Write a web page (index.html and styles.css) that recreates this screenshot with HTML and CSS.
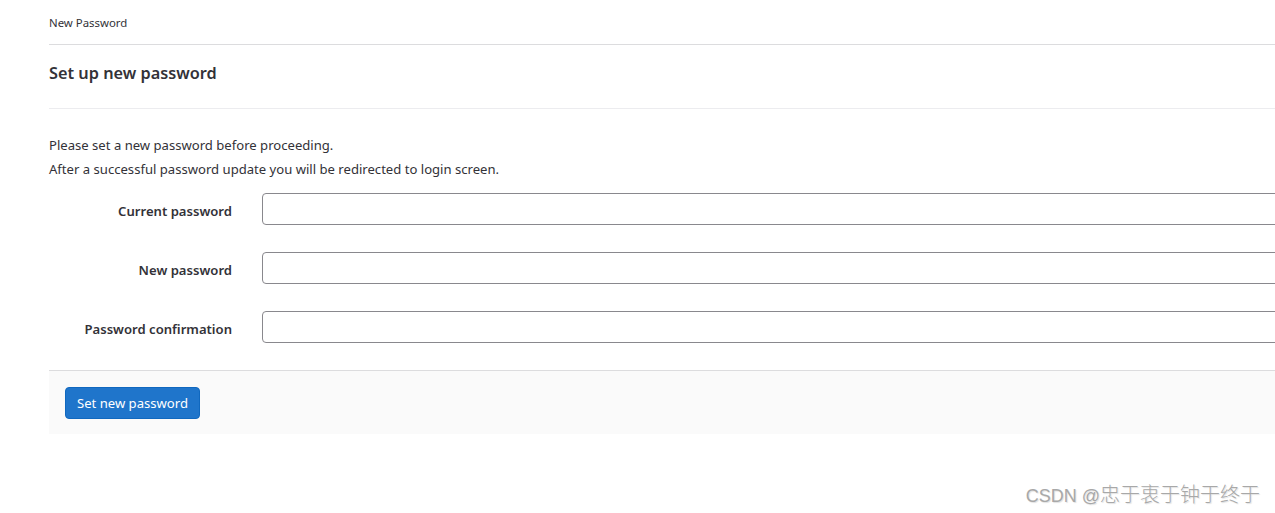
FILE: index.html
```html
<!DOCTYPE html>
<html>
<head>
<meta charset="utf-8">
<title>New Password</title>
<link rel="stylesheet" href="styles.css">
</head>
<body>
<div class="page">
  <div class="breadcrumb">New Password</div>
  <h3 class="title">Set up new password</h3>
  <div class="intro">
    <p>Please set a new password before proceeding.</p>
    <p>After a successful password update you will be redirected to login screen.</p>
  </div>
  <form class="form">
    <div class="row">
      <label class="label">Current password</label>
      <input class="input" type="password">
    </div>
    <div class="row">
      <label class="label">New password</label>
      <input class="input" type="password">
    </div>
    <div class="row">
      <label class="label">Password confirmation</label>
      <input class="input" type="password">
    </div>
    <div class="footer">
      <button class="btn" type="button">Set new password</button>
    </div>
  </form>
</div>
<div class="watermark"><span class="wm-latin">CSDN @</span>忠于衷于钟于终于</div>
</body>
</html>
```
FILE: styles.css
```css
html, body {
  margin: 0;
  padding: 0;
  overflow: hidden;
  background: #fff;
}
body {
  font-family: "Noto Sans", "Open Sans", sans-serif;
  color: #333238;
  font-size: 13.1px;
  position: relative;
  height: 513px;
}
.page {
  margin-left: 49px;
  width: 1300px;
}
.breadcrumb {
  height: 45px;
  display: flex;
  align-items: center;
  font-size: 11.4px;
  border-bottom: 1px solid #dcdcde;
  box-sizing: border-box;
}
.title {
  margin: 0;
  padding: 16px 0 23px;
  font-size: 16.3px;
  line-height: 24px;
  font-weight: 600;
  border-bottom: 1px solid #ececef;
}
.intro {
  padding-top: 24px;
}
.intro p {
  margin: 0;
  line-height: 24px;
}
.form {
  margin-top: 12px;
}
.row {
  display: grid;
  grid-template-columns: 183px 1fr;
  column-gap: 30px;
  align-items: center;
  margin-bottom: 27px;
}
.label {
  text-align: right;
  font-weight: 600;
  padding-top: 4px;
}
.input {
  height: 32px;
  box-sizing: border-box;
  border: 1px solid #89888d;
  border-radius: 4px;
  background: #fff;
  margin: 0;
}
.footer {
  margin-top: 27px;
  border-top: 1px solid #dcdcde;
  background: #fafafa;
  padding: 16px;
  height: 64px;
  box-sizing: border-box;
}
.btn {
  height: 32px;
  background: #1f75cb;
  border: 1px solid #1068bf;
  border-radius: 4px;
  color: #fff;
  font-family: inherit;
  font-size: 13.1px;
  padding: 0 11px;
  margin: 0;
}
.watermark {
  position: absolute;
  right: 15px;
  top: 483px;
  font-family: "Noto Sans CJK SC", sans-serif;
  font-size: 20px;
  font-weight: 300;
  line-height: 22px;
  color: #a8a8a8;
  text-shadow: 1px 1px 1px rgba(0,0,0,0.12);
}
.wm-latin {
  font-family: "Liberation Sans", sans-serif;
  font-size: 18px;
  font-weight: 400;
}
```
